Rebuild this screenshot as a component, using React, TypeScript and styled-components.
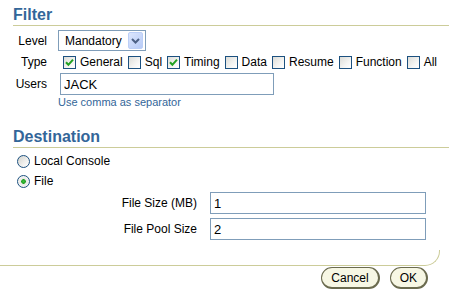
import styled, { createGlobalStyle } from "styled-components";

const GlobalStyle = createGlobalStyle`
  html, body {
    margin: 0;
    padding: 0;
    background: #ffffff;
  }
  body {
    font-family: "Liberation Sans", Arial, sans-serif;
    font-size: 12px;
    color: #000000;
  }
`;

const types = [
  { name: "General", checked: true },
  { name: "Sql", checked: false },
  { name: "Timing", checked: true },
  { name: "Data", checked: false },
  { name: "Resume", checked: false },
  { name: "Function", checked: false },
  { name: "All", checked: false },
];

const CheckMark = () => (
  <svg width="9" height="9" viewBox="0 0 9 9">
    <path d="M1 4.2 L3.4 6.8 L8 1.6" fill="none" stroke="#21a121" strokeWidth="2" />
  </svg>
);

const Chevron = () => (
  <svg width="9" height="6" viewBox="0 0 9 6">
    <path d="M1 1 L4.5 4.5 L8 1" fill="none" stroke="#4d6185" strokeWidth="2" />
  </svg>
);

const App = () => {
  return (
    <Page>
      <GlobalStyle />
      <Content>
        <Heading>Filter</Heading>
        <FilterGrid>
          <Label>Level</Label>
          <Select>
            <span>Mandatory</span>
            <DropButton>
              <Chevron />
            </DropButton>
          </Select>

          <Label>Type</Label>
          <CheckRow>
            {types.map((t) => (
              <CheckItem key={t.name}>
                <CheckBox>{t.checked && <CheckMark />}</CheckBox>
                {t.name}
              </CheckItem>
            ))}
          </CheckRow>

          <Label>Users</Label>
          <TextField width={214}>JACK</TextField>

          <span />
          <Hint>Use comma as separator</Hint>
        </FilterGrid>

        <Heading $spaced>Destination</Heading>
        <RadioList>
          <RadioItem>
            <Radio />
            Local Console
          </RadioItem>
          <RadioItem>
            <Radio $selected />
            File
          </RadioItem>
        </RadioList>

        <FileGrid>
          <Label>File Size (MB)</Label>
          <TextField width={216}>1</TextField>
          <Label>File Pool Size</Label>
          <TextField width={216}>2</TextField>
        </FileGrid>
      </Content>

      <CornerRule />

      <ButtonBar>
        <Button>Cancel</Button>
        <Button>OK</Button>
      </ButtonBar>
    </Page>
  );
};

export default App;

const Page = styled.div`
  width: 449px;
  height: 293px;
  overflow: hidden;
`;

const Content = styled.div`
  padding-left: 13px;
`;

const Heading = styled.div<{ $spaced?: boolean }>`
  margin-top: ${(p) => (p.$spaced ? "19px" : "5px")};
  font-size: 16px;
  line-height: 19px;
  font-weight: bold;
  color: #336699;
  padding-bottom: 1px;
  border-bottom: 1px solid #cccc99;
`;

const FilterGrid = styled.div`
  display: grid;
  grid-template-columns: 34px auto;
  column-gap: 13px;
  row-gap: 1px;
  margin-top: 4px;
  align-items: center;
  justify-items: start;
`;

const Label = styled.span`
  justify-self: end;
  white-space: nowrap;
  line-height: 20px;
`;

const Select = styled.div`
  margin-left: -2px;
  width: 88px;
  height: 21px;
  box-sizing: border-box;
  border: 1px solid #7f9db9;
  display: flex;
  align-items: center;
  justify-content: space-between;
  padding: 0 2px 0 6px;
  background: #ffffff;
`;

const DropButton = styled.span`
  width: 15px;
  height: 17px;
  box-sizing: border-box;
  display: flex;
  align-items: center;
  justify-content: center;
  border-radius: 2px;
  border: 1px solid #bccff7;
  background: linear-gradient(135deg, #dce6fd 0%, #b7cbf7 100%);
`;

const CheckRow = styled.div`
  display: flex;
  align-items: center;
  gap: 5px;
  height: 20px;
  margin-left: 3px;
`;

const CheckItem = styled.label`
  display: flex;
  align-items: center;
  gap: 4px;
  white-space: nowrap;
`;

const CheckBox = styled.span`
  width: 13px;
  height: 13px;
  box-sizing: border-box;
  border: 1px solid #1c5180;
  background: linear-gradient(135deg, #dcdcd7 0%, #f4f4f2 60%, #ffffff 100%);
  display: flex;
  align-items: center;
  justify-content: center;
`;

const TextField = styled.div<{ width: number }>`
  width: ${(p) => p.width}px;
  height: 22px;
  box-sizing: border-box;
  border: 1px solid #7f9db9;
  padding: 0 3px;
  display: flex;
  align-items: center;
  font-size: 13px;
  background: #ffffff;
`;

const Hint = styled.span`
  font-size: 11px;
  line-height: 12px;
  color: #336699;
  margin-left: -2px;
`;

const RadioList = styled.div`
  margin-top: 3px;
  display: flex;
  flex-direction: column;
`;

const RadioItem = styled.label`
  display: flex;
  align-items: center;
  gap: 4px;
  height: 20px;
  padding-left: 4px;
`;

const Radio = styled.span<{ $selected?: boolean }>`
  width: 13px;
  height: 13px;
  box-sizing: border-box;
  border-radius: 50%;
  border: 1px solid #1c5180;
  background: ${(p) =>
    p.$selected
      ? "radial-gradient(circle at 50% 50%, #3fc13f 0, #21a121 2px, #e8e8e4 2.6px, #ffffff 100%)"
      : "linear-gradient(135deg, #d2d2cc 0%, #f0f0ee 60%, #ffffff 100%)"};
`;

const FileGrid = styled.div`
  display: grid;
  grid-template-columns: 97px auto;
  column-gap: 13px;
  row-gap: 4px;
  margin-top: 1px;
  margin-left: 87px;
  align-items: center;
  justify-items: start;
`;

const CornerRule = styled.div`
  margin-top: 10px;
  width: 440px;
  height: 16px;
  box-sizing: border-box;
  border-bottom: 1px solid #cccc99;
  border-right: 1px solid #cccc99;
  border-bottom-right-radius: 15px;
`;

const ButtonBar = styled.div`
  display: flex;
  justify-content: flex-end;
  gap: 10px;
  padding-right: 21px;
  margin-top: 1px;
`;

const Button = styled.button`
  font-family: "Liberation Sans", Arial, sans-serif;
  font-size: 12px;
  height: 22px;
  padding: 0 9px;
  border: 1px solid #6b6b4f;
  border-right-width: 2px;
  border-bottom-width: 2px;
  border-radius: 11px;
  background: #f7f7e4;
  color: #000000;
`;
